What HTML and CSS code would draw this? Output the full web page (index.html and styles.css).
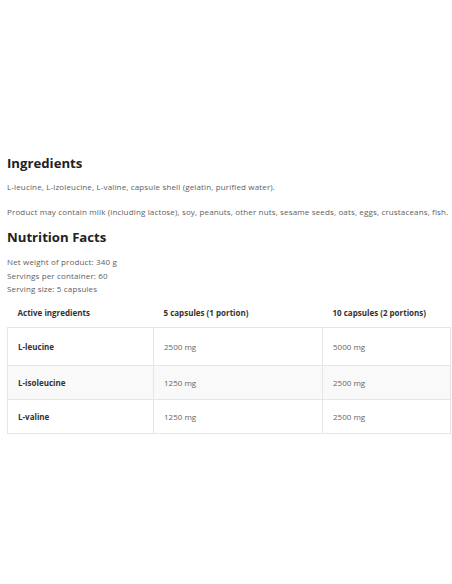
FILE: index.html
```html
<!DOCTYPE html>
<html>
<head>
<meta charset="utf-8">
<link rel="stylesheet" href="styles.css">
</head>
<body>
<div class="page">
  <h2 class="title">Ingredients</h2>
  <p class="text first">L-leucine, L-izoleucine, L-valine, capsule shell (gelatin, purified water).</p>
  <p class="text">Product may contain milk (including lactose), soy, peanuts, other nuts, sesame seeds, oats, eggs, crustaceans, fish.</p>
  <h2 class="title second">Nutrition Facts</h2>
  <div class="facts">
    <div>Net weight of product: 340 g</div>
    <div>Servings per container: 60</div>
    <div>Serving size: 5 capsules</div>
  </div>
  <table class="tbl">
    <thead>
      <tr><th>Active ingredients</th><th>5 capsules (1 portion)</th><th>10 capsules (2 portions)</th></tr>
    </thead>
    <tbody>
      <tr class="r1"><td class="name">L-leucine</td><td>2500 mg</td><td>5000 mg</td></tr>
      <tr class="alt"><td class="name">L-isoleucine</td><td>1250 mg</td><td>2500 mg</td></tr>
      <tr><td class="name">L-valine</td><td>1250 mg</td><td>2500 mg</td></tr>
    </tbody>
  </table>
</div>
</body>
</html>
```

FILE: styles.css
```css
html, body {
  margin: 0;
  padding: 0;
  background: #fff;
}
.page {
  padding: 153px 0 0 7px;
  font-family: "Open Sans", "Noto Sans", sans-serif;
  color: #5e5e5e;
}
.title {
  margin: 0;
  font-size: 13.2px;
  line-height: 20px;
  font-weight: 700;
  color: #222;
}
.second {
  margin-top: 9px;
}
.text {
  margin: 0;
  font-size: 8px;
  letter-spacing: 0.15px;
  line-height: 12px;
}
.text.first {
  margin-top: 8px;
  margin-bottom: 13px;
}
.facts {
  margin-top: 8px;
  font-size: 8px;
  letter-spacing: 0.15px;
  line-height: 13.5px;
}
.tbl {
  margin-top: 3px;
  border-collapse: collapse;
  width: 444px;
  font-size: 8px;
}
.tbl th {
  text-align: left;
  font-weight: 700;
  color: #333;
  height: 28px;
  padding: 0 10px;
  border-bottom: 1px solid #e6e6e6;
}
.tbl td {
  height: 33px;
  padding: 0 10px;
  border: 1px solid #e6e6e6;
  color: #666;
}
.tbl tr.r1 td {
  height: 37px;
}
.tbl th:nth-child(1), .tbl td:nth-child(1) { width: 125px; }
.tbl th:nth-child(2), .tbl td:nth-child(2) { width: 148px; }
.tbl td.name {
  font-weight: 700;
  color: #333;
}
.tbl tr.alt td {
  background: #f9f9f9;
}
```
